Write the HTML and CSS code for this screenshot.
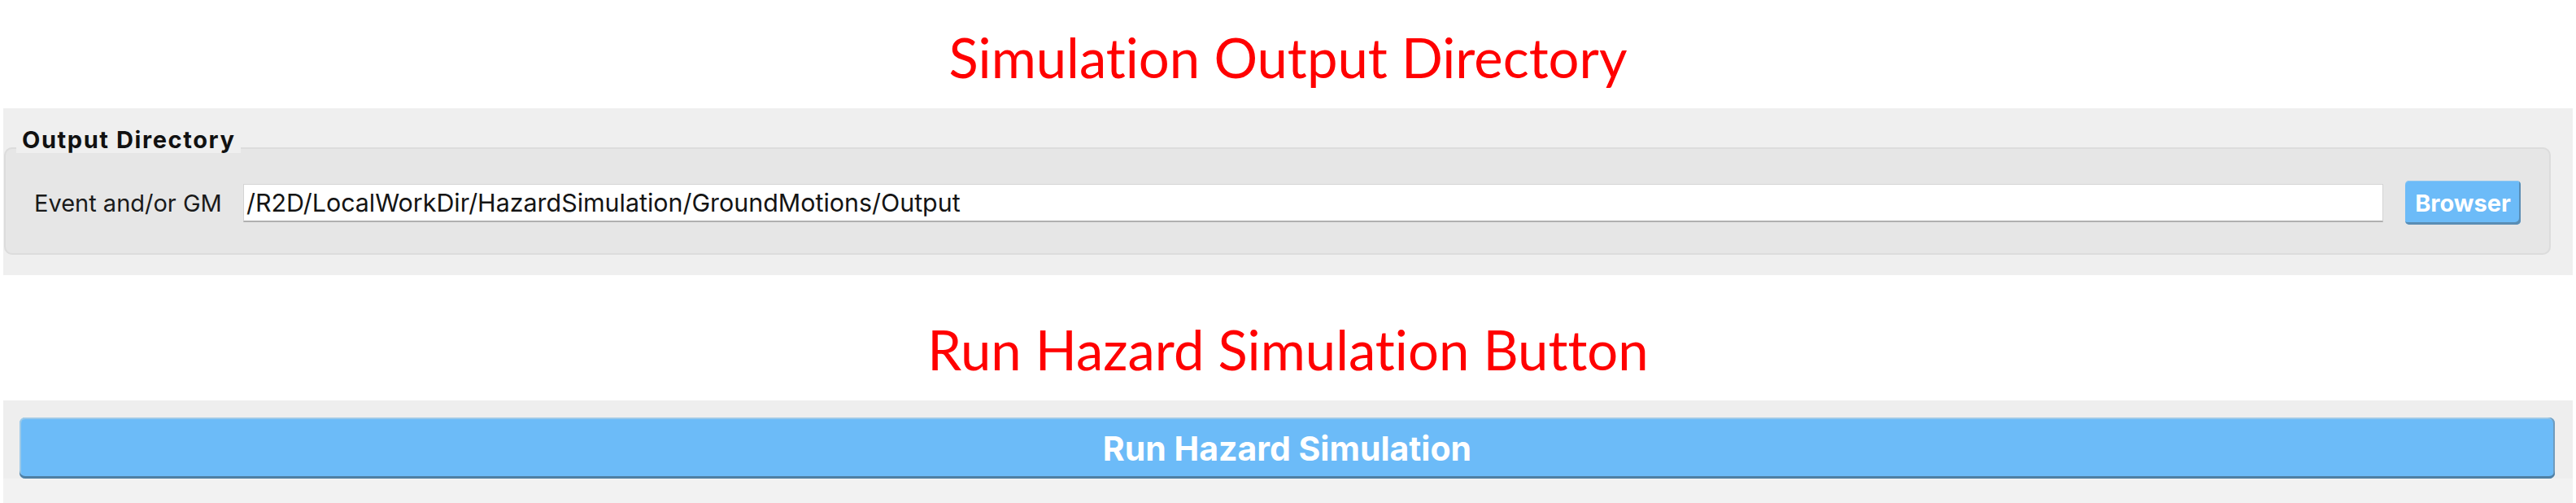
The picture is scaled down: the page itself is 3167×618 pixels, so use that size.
FILE: index.html
```html
<!DOCTYPE html>
<html lang="en">
<head>
<meta charset="utf-8">
<title>Simulation Output Directory</title>
<link rel="stylesheet" href="styles.css">
</head>
<body>
  <div class="caption">Simulation Output Directory</div>
  <section class="panel panel-output">
    <fieldset class="group">
      <legend class="group-title">Output Directory</legend>
      <div class="row">
        <label class="row-label" for="outdir">Event and/or GM</label>
        <input id="outdir" class="path-input" type="text" value="/R2D/LocalWorkDir/HazardSimulation/GroundMotions/Output">
        <button class="btn btn-small" type="button">Browser</button>
      </div>
    </fieldset>
  </section>
  <div class="caption">Run Hazard Simulation Button</div>
  <section class="panel panel-run">
    <button class="btn btn-run" type="button">Run Hazard Simulation</button>
  </section>
</body>
</html>
```

FILE: styles.css
```css
html, body {
  margin: 0;
  padding: 0;
  background: #ffffff;
  overflow: hidden;
}

body {
  width: 3167px;
  height: 618px;
  font-family: "Inter", "Liberation Sans", sans-serif;
  color: #1a1a1a;
}

.caption {
  box-sizing: border-box;
  height: 133px;
  padding-top: 30px;
  font-family: "Lato", "Open Sans", sans-serif;
  font-size: 67px;
  line-height: 80px;
  color: #ff0000;
  text-align: center;
  font-variant-ligatures: none;
  font-feature-settings: "liga" 0, "dlig" 0;
}

.panel {
  box-sizing: border-box;
  margin: 0 4px;
  background: #efefef;
}

.panel-output {
  height: 205px;
  padding: 22px 27px 0 1px;
  margin-bottom: 21px;
}

.group {
  margin: 0;
  padding: 0 0 35px 0;
  min-width: 0;
  border: 2px solid #dcdcdc;
  border-radius: 10px;
  background: #e6e6e6;
}

.group-title {
  margin-left: 13px;
  padding: 0 6px 20px 7px;
  font-size: 29px;
  line-height: 34px;
  font-weight: 700;
  letter-spacing: 1.6px;
  color: #111111;
  background: linear-gradient(#efefef 0, #efefef 33px, transparent 33px);
}

.row {
  display: flex;
  align-items: center;
  padding: 13px 35px 0 35px;
}

.row-label {
  flex: none;
  width: 228px;
  margin-right: 29px;
  font-size: 29px;
  white-space: nowrap;
  color: #1a1a1a;
}

.path-input {
  flex: 1;
  min-width: 0;
  box-sizing: border-box;
  height: 47px;
  margin: 0 27px 0 0;
  padding: 0 3px;
  border: 1px solid #d4d4d4;
  border-bottom: 2px solid #b0b0b0;
  background: #ffffff;
  font-family: "Inter", "Liberation Sans", sans-serif;
  font-size: 30.4px;
  color: #141414;
  outline: none;
}

.btn {
  box-sizing: border-box;
  border: none;
  background: #6cbbf8;
  color: #ffffff;
  font-family: "Inter", "Liberation Sans", sans-serif;
  font-weight: 700;
  cursor: pointer;
}

.btn-small {
  flex: none;
  width: 142px;
  height: 54px;
  padding: 0;
  border-radius: 5px;
  font-size: 29px;
  box-shadow: inset -2px -3px 0 #5a8db4, inset 0 1px 0 #8cc6f0;
}

.panel-run {
  height: 127px;
  padding: 21px 22px 0 20px;
  background: linear-gradient(#eeeeee 0, #eeeeee 96px, #f2f2f2 96px);
}

.btn-run {
  display: block;
  width: 100%;
  height: 75px;
  padding: 0;
  border-radius: 7px;
  font-size: 41px;
  box-shadow: inset 0 -3px 0 #4f7fa3, inset -2px 0 0 #6f9bbd, inset 0 2px 0 #9cc9e8, inset 2px 0 0 #9cc9e8;
}
```
